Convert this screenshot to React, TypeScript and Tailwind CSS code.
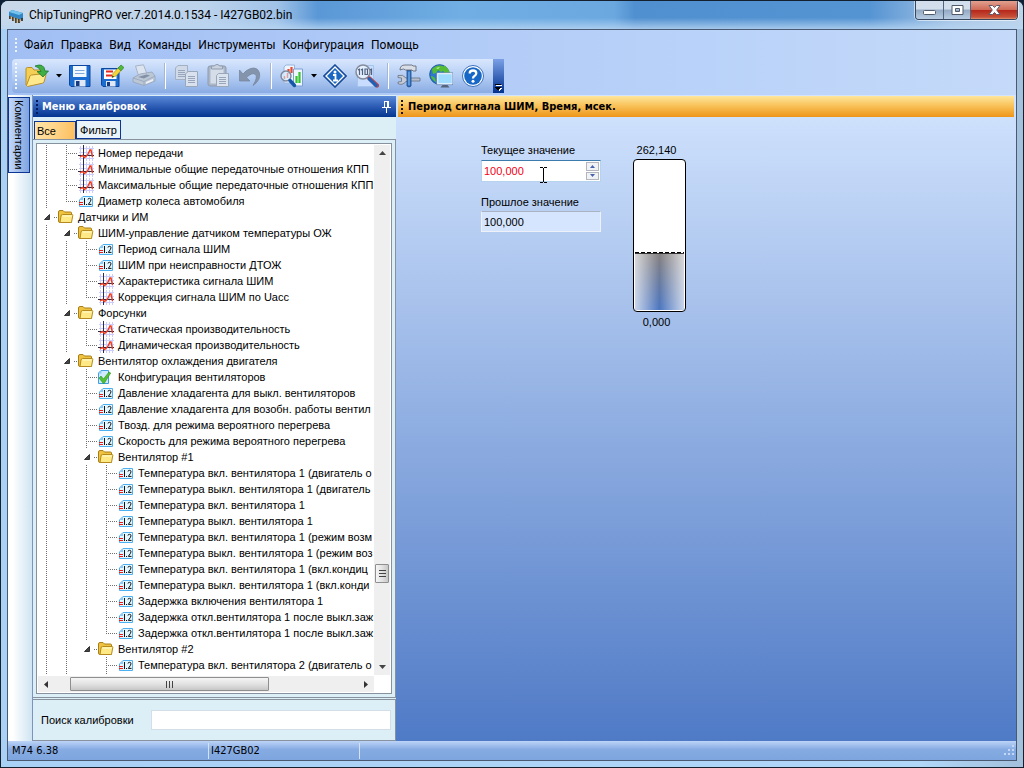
import React from "react";

type Kind = "folder" | "graph" | "value" | "check";
// Guide cells: "|" passing line, "+" branch, "L" last branch, "v" expander, " " empty
type Row = { cells: string; kind: Kind; text: string };

const rows: Row[] = [
  { cells: "|+", kind: "graph", text: "Номер передачи" },
  { cells: "|+", kind: "graph", text: "Минимальные общие передаточные отношения КПП" },
  { cells: "|+", kind: "graph", text: "Максимальные общие передаточные отношения КПП" },
  { cells: "|L", kind: "value", text: "Диаметр колеса автомобиля" },
  { cells: "v", kind: "folder", text: "Датчики и ИМ" },
  { cells: "|v", kind: "folder", text: "ШИМ-управление датчиком температуры ОЖ" },
  { cells: "||+", kind: "value", text: "Период сигнала ШИМ" },
  { cells: "||+", kind: "value", text: "ШИМ при неисправности ДТОЖ" },
  { cells: "||+", kind: "graph", text: "Характеристика сигнала ШИМ" },
  { cells: "||L", kind: "graph", text: "Коррекция сигнала ШИМ по Uacc" },
  { cells: "|v", kind: "folder", text: "Форсунки" },
  { cells: "||+", kind: "graph", text: "Статическая производительность" },
  { cells: "||L", kind: "graph", text: "Динамическая производительность" },
  { cells: "|v", kind: "folder", text: "Вентилятор охлаждения двигателя" },
  { cells: "||+", kind: "check", text: "Конфигурация вентиляторов" },
  { cells: "||+", kind: "value", text: "Давление хладагента для выкл. вентиляторов" },
  { cells: "||+", kind: "value", text: "Давление хладагента для возобн. работы вентил" },
  { cells: "||+", kind: "value", text: "Твозд. для режима вероятного перегрева" },
  { cells: "||+", kind: "value", text: "Скорость для режима вероятного перегрева" },
  { cells: "||v", kind: "folder", text: "Вентилятор #1" },
  { cells: "|||+", kind: "value", text: "Температура вкл. вентилятора 1 (двигатель о" },
  { cells: "|||+", kind: "value", text: "Температура выкл. вентилятора 1 (двигатель" },
  { cells: "|||+", kind: "value", text: "Температура вкл. вентилятора 1" },
  { cells: "|||+", kind: "value", text: "Температура выкл. вентилятора 1" },
  { cells: "|||+", kind: "value", text: "Температура вкл. вентилятора 1 (режим возм" },
  { cells: "|||+", kind: "value", text: "Температура выкл. вентилятора 1 (режим воз" },
  { cells: "|||+", kind: "value", text: "Температура вкл. вентилятора 1 (вкл.кондиц" },
  { cells: "|||+", kind: "value", text: "Температура выкл. вентилятора 1 (вкл.конди" },
  { cells: "|||+", kind: "value", text: "Задержка включения вентилятора 1" },
  { cells: "|||+", kind: "value", text: "Задержка откл.вентилятора 1 после выкл.заж" },
  { cells: "|||L", kind: "value", text: "Задержка откл.вентилятора 1 после выкл.заж" },
  { cells: "||v", kind: "folder", text: "Вентилятор #2" },
  { cells: "|| +", kind: "value", text: "Температура вкл. вентилятора 2 (двигатель о" },
];

function Guide({ c }: { c: string }) {
  return (
    <svg width="20" height="16" className="shrink-0" shapeRendering="crispEdges" fill="none" stroke="#6f6f6f">
      {(c === "|" || c === "+") && <path d="M8.500 0V16" strokeDasharray="1 1" />}
      {c === "L" && <path d="M8.500 0V9" strokeDasharray="1 1" />}
      {(c === "+" || c === "L") && <path d="M10 8.500H20" strokeDasharray="1 1" />}
      {c === "v" && (
        <>
          <path d="M16 8.500H20" strokeDasharray="1 1" />
          <path d="M6.500 10.500L11.500 5.500V10.500Z" fill="#444" stroke="#333" strokeWidth="1" shapeRendering="auto" />
        </>
      )}
    </svg>
  );
}

function NodeIcon({ kind }: { kind: Kind }) {
  if (kind === "folder")
    return (
      <svg width="20" height="16" className="shrink-0">
        <path d="M.5 3Q.5 1.500 2 1.500H5L6.500 3H12.500Q13.500 3 13.500 4V13.500H2Q.5 13.500 .5 12Z" fill="#efc33f" stroke="#a8801a" />
        <path d="M2 13.500L3 7Q3.200 5.500 4.500 5.500H14Q15 5.500 14.800 6.500L13.700 12.500Q13.500 13.500 12.500 13.500Z" fill="#ffe987" stroke="#b58a1c" />
        <path d="M4.500 7H13.500" stroke="#fffbd2" />
      </svg>
    );
  if (kind === "graph")
    return (
      <svg width="20" height="16" className="shrink-0" fill="none">
        <path d="M2.500 1V16M8.500 1V16M11.500 1V16M14.500 1V16M1 3.500H16M1 7.500H16M1 13.500H16" stroke="#cdcdfb" shapeRendering="crispEdges" />
        <path d="M5.500 0V16M0 10.500H16" stroke="#2b2b4a" shapeRendering="crispEdges" />
        <path d="M2 12L4.500 10.500L6.500 12.500L9.500 10L12 5L13 5L14.500 12" stroke="#f23a1d" strokeWidth="1.400" />
      </svg>
    );
  if (kind === "value")
    return (
      <svg width="20" height="16" className="shrink-0">
        <path d="M5 3.500H14.500V13.500H1.500V7Z" fill="#e2f7ff" stroke="#4fb0f0" />
        <path d="M1.500 7L5 3.500V7Z" fill="#8cc7f3" />
        <path d="M1 9.500H5M1 11.500H5" stroke="#f01818" shapeRendering="crispEdges" />
        <path d="M6.500 5V12M8 11.500H9" stroke="#111" shapeRendering="crispEdges" />
        <path d="M10 6.500Q10 5.300 11.500 5.300T13 6.800Q13 8 10.300 11.400H13.500" stroke="#111" fill="none" />
      </svg>
    );
  return (
    <svg width="20" height="16" className="shrink-0">
      <path d="M3 1.500H10.500V14.500H.5V4Z" fill="#cdeaff" stroke="#3d9fe5" />
      <path d="M.5 4.500H3.500V1.500Z" fill="#8cc7f3" />
      <path d="M1 9L3 7L5.500 10L11 3L12.700 4L5.800 15Z" fill="#52c234" stroke="#2d8f1e" strokeWidth=".6" />
    </svg>
  );
}

const Svg = ({ children }: { children: React.ReactNode }) => (
  <svg width="24" height="24" viewBox="0 0 24 24" fill="none">
    {children}
  </svg>
);

const OpenIcon = () => (
  <Svg>
    <path d="M1 21V5Q1 3.500 2.500 3.500H7L9 6H17V12L5 21.500Z" fill="#f5cf55" stroke="#b98f28" />
    <path d="M1.500 21.500L5 12Q5.300 11 6.500 11L20 9.500Q21.300 9.500 21 10.700L19 18Q18.500 19 17.500 19.200L2.500 22.500Z" fill="#ffe98d" stroke="#b98f28" />
    <path d="M10 2Q19 -1.500 20 7H23.500L18 13L12 7.500H16Q15 3.500 10 2Z" fill="#3fae43" stroke="#1b7a29" strokeWidth=".8" />
  </Svg>
);
const SaveIcon = () => (
  <Svg>
    <path d="M1.500 1.500H22V22.500H3L1.500 21Z" fill="#1b6dd0" stroke="#0c46a0" />
    <rect x="5" y="2" width="13.500" height="11" fill="#f2f8ff" />
    <path d="M7 6.500H16.500M7 9.500H16.500" stroke="#7fa8dc" />
    <rect x="6.500" y="16" width="11" height="6.500" fill="#dfe8f4" />
    <rect x="8" y="17" width="3.500" height="5" fill="#173a80" />
  </Svg>
);
const SaveEditIcon = () => (
  <Svg>
    <path d="M1.500 4.500H19V22.500H3L1.500 21Z" fill="#1b6dd0" stroke="#0c46a0" />
    <rect x="4" y="5.500" width="12.500" height="9.500" fill="#fff" />
    <path d="M6 7.500H13M6 11.500H12" stroke="#e32b20" strokeWidth="1.800" />
    <rect x="6" y="17" width="9.500" height="5.500" fill="#dfe8f4" />
    <rect x="7" y="18" width="3" height="4" fill="#173a80" />
    <path d="M12 13.500L13 9.500L19 3L22 5.500L16 12Z" fill="#f5d437" stroke="#8b8a20" strokeWidth=".6" />
    <path d="M18 4L21 1L24 3.500L21 6.800Z" fill="#4fb93b" stroke="#2b7b22" strokeWidth=".6" />
    <path d="M12 13.500L12.600 11.500L14 12.800Z" fill="#222" />
  </Svg>
);
const PrintIcon = () => (
  <Svg>
    <path d="M3.500 2L11.500 .8L15 10L7 13Z" fill="#dce4f0" stroke="#a7b3c6" />
    <path d="M1 14L8 10L20 8L23 12V17L12 21.500L1 18Z" fill="#bcc7d6" stroke="#96a3b8" strokeWidth=".8" />
    <path d="M1 14L12 17.500L23 12M12 17.500V21.500" stroke="#96a3b8" strokeWidth=".8" />
    <path d="M6 13L12 14.600L18 11.500L14.500 10.500Z" fill="#8291a8" />
    <path d="M14 18L21 15V17L14 20Z" fill="#edf1f7" />
  </Svg>
);
const CopyIcon = () => (
  <Svg>
    <path d="M4 1.500H13.500V15.500H1.500V4Z" fill="#d0d9e8" stroke="#a3afc2" />
    <path d="M4 6.500H11M4 8.500H11M4 10.500H11M4 12.500H11" stroke="#98a5bb" />
    <path d="M14 7.500H23.500V22.500H11.500V10Z" fill="#d9e1ee" stroke="#9aa7bb" />
    <path d="M14 12.500H21M14 14.500H21M14 16.500H21M14 18.500H21" stroke="#98a5bb" />
  </Svg>
);
const PasteIcon = () => (
  <Svg>
    <rect x="2" y="2" width="18" height="20" rx="2" fill="#aab6c7" stroke="#8e9bb0" />
    <rect x="4.500" y="4.500" width="13" height="15" fill="#d5dde9" />
    <path d="M5.500 5V2H8.500Q9 .5 11 .5T13.500 2H16.500V5Z" fill="#cbd3df" stroke="#8e9bb0" />
    <path d="M12.500 9.500H22.500V22.500H10.500V11.500Z" fill="#dae2ee" stroke="#9aa7bb" />
    <path d="M13 13.500H20M13 15.500H20M13 17.500H20M13 19.500H20" stroke="#98a5bb" />
  </Svg>
);
const UndoIcon = () => (
  <Svg>
    <path d="M1.500 6V17H12L8.500 13.500Q14 8 17.500 10.500Q20 13 15 21.500Q23 16 21.500 9Q19.500 2.500 12.500 4.500Q8 6 5 10Z" fill="#8494ab" stroke="#74849d" strokeWidth=".7" />
  </Svg>
);
const ChartIcon = () => (
  <Svg>
    <path d="M6 1H14.500V19H4V3Z" fill="#eef5ff" stroke="#98b6dd" />
    <path d="M8.500 5V10M11.500 3V9" stroke="#e8482c" strokeWidth="2.200" />
    <path d="M13.500 5H22.500V22H13.500Z" fill="#edf6ff" stroke="#7d9ed0" />
    <path d="M16.500 12V19M19.500 8V19" stroke="#37c32e" strokeWidth="2.200" />
    <circle cx="6" cy="12" r="5" fill="#d5ebff" fillOpacity=".85" stroke="#7d879c" strokeWidth="1.400" />
    <path d="M4.500 12V15M7.500 9V14" stroke="#e0a09e" strokeWidth="1.500" />
    <path d="M10 16.500L14.500 21.500" stroke="#1757a7" strokeWidth="3.500" strokeLinecap="round" />
  </Svg>
);
const InfoIcon = () => (
  <Svg>
    <path d="M12 1L23 12L12 23L1 12Z" fill="#fff" stroke="#174b9c" strokeWidth="1.600" />
    <path d="M12 4L20 12L12 20L4 12Z" fill="#1969c3" />
    <circle cx="12" cy="8" r="1.500" fill="#fff" />
    <path d="M10 11H12.500V16M10 16.500H15" stroke="#fff" strokeWidth="1.800" />
  </Svg>
);
const BinaryIcon = () => (
  <Svg>
    <path d="M4 1.500H18.500V22.500H2.500V4Z" fill="#c8ddfd" stroke="#a5c4ed" />
    <circle cx="8" cy="8" r="7" fill="#e4f0ff" stroke="#858b9b" strokeWidth="1.500" />
    <path d="M4.500 4.500V11M3 6L4.500 5M7.500 4.500V11M6 6L7.500 5M10 5H12.500V10.500H10ZM16.500 4.500V11M15 6L16.500 5" stroke="#51617e" strokeWidth="1.200" />
    <path d="M14.500 14.500L22 21.500" stroke="#b8484f" strokeWidth="4.400" strokeLinecap="round" />
    <path d="M14.200 14.800L21 21.500" stroke="#1d61b8" strokeWidth="3.200" strokeLinecap="round" />
  </Svg>
);
const ToolsIcon = () => (
  <Svg>
    <path d="M13 14H23V17H13Z" fill="#b5bfcf" stroke="#687182" strokeWidth=".8" />
    <path d="M1 11.500Q6 10 9 14H11V17.500H9Q5 22 1 19.500V18L4.500 17.500V14L1 13.500Z" fill="#c5cbd7" stroke="#687182" strokeWidth=".8" />
    <path d="M10 6H14V22Q12 24 10 22Z" fill="#3479ca" stroke="#1a4784" strokeWidth=".8" />
    <path d="M12 8V21" stroke="#83b9ee" />
    <path d="M3 6Q3 1 8 1H15L16 2H19V7H16L15 6H8.500Q7 4 3 6Z" fill="#d9dde5" stroke="#59606e" strokeWidth=".8" />
  </Svg>
);
const GlobeIcon = () => (
  <Svg>
    <circle cx="10.500" cy="10.500" r="9.800" fill="#2d78cd" stroke="#1a569b" />
    <path d="M3 5Q8 0 14 2L16 6L12 8L9 6L7 9L4 10ZM15 1.500Q20 4 20.500 9L15 9L14 5Z" fill="#55bd35" />
    <path d="M3 12L6 14L7 18Q3 16 2 12Z" fill="#55bd35" />
    <path d="M7 4L11 3L9 5Z" fill="#c9f3a4" />
    <rect x="8.500" y="9.500" width="15" height="10.500" fill="#9fdcff" stroke="#f2f7fc" strokeWidth="1.500" />
    <rect x="7.800" y="8.800" width="16" height="12" stroke="#5a7ba8" strokeWidth=".6" />
    <path d="M13.500 21H18.500L20.500 23.500H11.500Z" fill="#55657c" />
  </Svg>
);
const HelpIcon = () => (
  <Svg>
    <circle cx="12" cy="12" r="10.500" fill="#fff" stroke="#3970bd" />
    <circle cx="12" cy="12" r="8.800" fill="#1767c6" />
    <path d="M8.700 9.500Q8.700 6.500 12 6.500T15.300 9.300Q15.300 11 13.500 12Q12 12.800 12 14.500" stroke="#fff" strokeWidth="2.300" />
    <circle cx="12" cy="17.300" r="1.500" fill="#fff" />
  </Svg>
);

const Tool = ({ name, children }: { name: string; children: React.ReactNode }) => (
  <button type="button" aria-label={name} className="flex w-8 items-center justify-center">
    {children}
  </button>
);
const Drop = ({ name }: { name: string }) => (
  <button type="button" aria-label={name} className="flex w-[11px] items-center justify-center">
    <svg width="6" height="4">
      <path d="M0 0H6L3 3.500Z" fill="#000" />
    </svg>
  </button>
);
const Sep = () => (
  <div className="flex w-[10px] justify-center py-1">
    <div className="w-[2px] border-l border-[#a5b6d6] bg-white" />
  </div>
);
const Grip = ({ dots, color }: { dots: number; color: string }) => (
  <svg width="3" height={dots * 4} className="shrink-0">
    {Array.from({ length: dots }, (_, i) => (
      <rect key={i} x="0" y={i * 4 + 1} width="2" height="2" fill={color} />
    ))}
  </svg>
);

const menu = ["Файл", "Правка", "Вид", "Команды", "Инструменты", "Конфигурация", "Помощь"];

export default function App() {
  return (
    <div className="h-screen bg-[#0d2036] font-['Liberation_Sans',Arial,sans-serif] text-[11px] leading-4 text-black">
      <div className="flex h-full flex-col overflow-hidden rounded-t-lg border border-[#15202e] bg-[linear-gradient(90deg,#a9d0f5,#b0d6f8_90%,#a3c0dc)] px-[6px] pb-[6px]">
        <header className="-mx-[6px] flex h-7 shrink-0 items-start bg-[linear-gradient(180deg,transparent_60%,#b9d6f2cc),linear-gradient(90deg,#c9d9ea,#bcd3ec_20%,#a1c3e8_27%,#5a97d6_31%,#70aee4_45%,#6ba8e0_60%,#5190d0_62%,#5594d3_85%,#a6c4e5_93%,#bdd3e9)] pl-[7px] pr-[5px]">
          <svg width="16" height="16" className="mt-[7px] shrink-0">
            <path d="M1 4L4 2L15 5V11L11 12L1 8Z" fill="#3286c4" />
            <path d="M1 4L4 2L15 5L11 7Z" fill="#74c3ec" />
            <path d="M2 8V11M5 9V13M8 10V15M11 11V15M14 10V13" stroke="#38342c" strokeWidth="1.800" />
            <path d="M3 8V11M6 9V13M9 10V15M12 11V14" stroke="#cf9c46" strokeWidth=".8" />
          </svg>
          <h1 className="ml-[5px] mt-[6px] flex-1 font-['Roboto',sans-serif] text-xs leading-4">ChipTuningPRO ver.7.2014.0.1534 - I427GB02.bin</h1>
          <div className="flex h-[19px] overflow-hidden rounded-b border border-t-0 border-[#37475f] shadow-[0_0_0_1px_#ffffff90]">
            <button type="button" aria-label="Свернуть" className="flex w-7 items-center justify-center border-r border-[#52657f] bg-[linear-gradient(#d2deeb_45%,#93a9c4_50%,#b8cde2)]">
              <svg width="13" height="12">
                <rect x=".5" y="6.500" width="12" height="4" rx="1" fill="#fff" stroke="#505a6b" />
              </svg>
            </button>
            <button type="button" aria-label="Развернуть" className="flex w-[27px] items-center justify-center border-r border-[#52657f] bg-[linear-gradient(#d2deeb_45%,#93a9c4_50%,#b8cde2)]">
              <svg width="13" height="12">
                <path d="M1 1.500H12V10.500H1ZM4.500 4.500V7.500H8.500V4.500Z" fill="#fff" fillRule="evenodd" stroke="#505a6b" />
              </svg>
            </button>
            <button type="button" aria-label="Закрыть" className="flex w-[46px] items-center justify-center bg-[linear-gradient(#e2a08f,#cf6b57_48%,#b5281b_52%,#c8523a_90%,#de9473)]">
              <svg width="13" height="12">
                <path d="M1 1.500H4.500L6.500 3.500L8.500 1.500H12L8.700 6L12 10.500H8.500L6.500 8.500L4.500 10.500H1L4.300 6Z" fill="#fff" stroke="#5e5a68" />
              </svg>
            </button>
          </div>
        </header>

        <div className="flex min-h-0 flex-1 flex-col border border-[#4a5a72]">
          <div className="shrink-0 bg-[linear-gradient(90deg,#a2bff4,#b9d2f9_68%,#c5daf9)] pb-[2px]">
            <nav className="flex h-[29px] items-center pl-[7px]">
              <Grip dots={4} color="#eef4ff" />
              <ul className="ml-[6px] flex gap-[7px] font-['Roboto',sans-serif] text-xs leading-4">
                {menu.map((m) => (
                  <li key={m}>
                    <a href="#">{m}</a>
                  </li>
                ))}
              </ul>
            </nav>
            <div className="ml-1 flex h-[34px] w-fit overflow-hidden rounded-l bg-[linear-gradient(#d9e7fd,#b4cdf4_50%,#8aace3)]">
              <div className="flex w-[9px] items-center pl-[3px]">
                <Grip dots={7} color="#f5f8ff" />
              </div>
              <Tool name="Открыть"><OpenIcon /></Tool>
              <Drop name="Недавние файлы" />
              <Tool name="Сохранить"><SaveIcon /></Tool>
              <Tool name="Сохранить как"><SaveEditIcon /></Tool>
              <Tool name="Печать"><PrintIcon /></Tool>
              <Sep />
              <Tool name="Копировать"><CopyIcon /></Tool>
              <Tool name="Вставить"><PasteIcon /></Tool>
              <Tool name="Отменить"><UndoIcon /></Tool>
              <Sep />
              <Tool name="Анализ"><ChartIcon /></Tool>
              <Drop name="Виды анализа" />
              <Tool name="Сведения"><InfoIcon /></Tool>
              <Tool name="Двоичный просмотр"><BinaryIcon /></Tool>
              <Sep />
              <Tool name="Настройки"><ToolsIcon /></Tool>
              <Tool name="Обновление"><GlobeIcon /></Tool>
              <Tool name="Справка"><HelpIcon /></Tool>
              <button type="button" aria-label="Параметры панели" className="ml-1 flex w-[11px] items-end justify-center bg-[linear-gradient(#7ba0e6,#01318e)] pb-[2px]">
                <svg width="7" height="8" shapeRendering="crispEdges">
                  <path d="M1 2H7V3H1ZM2 5H7V6H6V7H5V8H4V7H3V6H2Z" fill="#fff" />
                  <path d="M0 1H6V2H0ZM0 4H6V5H5V6H4V7H2V6H1V5H0Z" fill="#000" />
                </svg>
              </button>
            </div>
          </div>

          <main className="flex min-h-0 flex-1 bg-[#dceef6]">
            <aside className="w-6 shrink-0 bg-[linear-gradient(90deg,#fff_20%,#cfe4f1)] pt-[2px]">
              <button type="button" className="flex h-[76px] w-[22px] items-center justify-center border border-[#0d3596] bg-[linear-gradient(90deg,#c3d8f8,#7fa4df)] [writing-mode:vertical-rl]">
                Комментарии
              </button>
            </aside>

            <section className="flex w-[364px] shrink-0 flex-col border-l border-[#7b94bd]">
              <div className="mt-px flex h-[21px] shrink-0 items-center bg-[linear-gradient(#5a89d8,#2c5cb4_50%,#03348f)] pl-[3px] pr-1 font-['DejaVu_Sans_Condensed','DejaVu_Sans',sans-serif] font-bold text-white">
                <Grip dots={4} color="#001b5e" />
                <h2 className="ml-[3px] flex-1">Меню калибровок</h2>
                <button type="button" aria-label="Закрепить">
                  <svg width="10" height="13" fill="none" stroke="#fff" shapeRendering="crispEdges">
                    <path d="M2.500 7V1.500H6.500V7M5.500 2V7M0 7.500H9M4.500 8V13" />
                  </svg>
                </button>
              </div>
              <div className="flex shrink-0 pl-px pt-[3px]">
                <button type="button" className="mt-px h-[18px] w-[42px] border border-b-0 border-[#0d3596] bg-[linear-gradient(100deg,#ffe5a8,#ffd489_50%,#fdbd5c)] pl-[2px] text-left">Все</button>
                <button type="button" className="h-[19px] w-[45px] border border-[#0d3596] bg-[#eaf3fa] text-center">Фильтр</button>
              </div>
              <div className="flex min-h-0 flex-1 flex-col border border-l-0 border-[#87929e] p-[3px]">
                <div className="flex min-h-0 flex-1 flex-col border border-[#87929e] bg-white p-px">
                  <div className="flex min-h-0 flex-1">
                    <ul className="min-w-0 flex-1 overflow-hidden">
                      {rows.map((r, i) => (
                        <li key={i} className="flex h-4 whitespace-nowrap">
                          {r.cells.split("").map((c, j) => (
                            <Guide key={j} c={c} />
                          ))}
                          <NodeIcon kind={r.kind} />
                          <span>{r.text}</span>
                        </li>
                      ))}
                      <li aria-hidden="true" className="flex h-4">
                        {"|| |".split("").map((c, j) => (
                          <Guide key={j} c={c} />
                        ))}
                      </li>
                    </ul>
                    <div className="flex w-4 shrink-0 flex-col items-center bg-[#efefef]">
                      <button type="button" aria-label="Вверх" className="flex h-4 w-4 items-center justify-center">
                        <svg width="7" height="4"><path d="M0 4L3.500 0L7 4Z" fill="#444" /></svg>
                      </button>
                      <div className="grow-[404]" />
                      <div className="flex h-[19px] w-[14px] flex-col items-center justify-center gap-[2px] rounded-[1px] border border-[#8f8f8f] bg-[linear-gradient(90deg,#f5f5f5,#e3e3e3_50%,#c7c7c7)]">
                        <i className="h-px w-[7px] bg-[#444]" />
                        <i className="h-px w-[7px] bg-[#444]" />
                        <i className="h-px w-[7px] bg-[#444]" />
                      </div>
                      <div className="grow-[76]" />
                      <button type="button" aria-label="Вниз" className="flex h-4 w-4 items-center justify-center">
                        <svg width="7" height="4"><path d="M0 0H7L3.500 4Z" fill="#444" /></svg>
                      </button>
                    </div>
                  </div>
                  <div className="mr-4 mt-px flex h-4 shrink-0 items-center bg-[#efefef]">
                    <button type="button" aria-label="Влево" className="flex w-4 items-center justify-center">
                      <svg width="4" height="7"><path d="M4 0V7L0 3.500Z" fill="#333" /></svg>
                    </button>
                    <div className="grow-[16]" />
                    <div className="flex h-[14px] w-[199px] items-center justify-center gap-[2px] rounded-[1px] border border-[#8f8f8f] bg-[linear-gradient(#f5f5f5,#e3e3e3_50%,#c7c7c7)]">
                      <i className="h-[7px] w-px bg-[#444]" />
                      <i className="h-[7px] w-px bg-[#444]" />
                      <i className="h-[7px] w-px bg-[#444]" />
                    </div>
                    <div className="grow-[89]" />
                    <button type="button" aria-label="Вправо" className="flex w-4 items-center justify-center">
                      <svg width="4" height="7"><path d="M0 0V7L4 3.500Z" fill="#333" /></svg>
                    </button>
                  </div>
                </div>
              </div>
              <div className="mt-px flex h-[42px] shrink-0 items-center border border-l-0 border-[#87929e] pl-2 pr-1">
                <label htmlFor="search" className="w-[110px]">Поиск калибровки</label>
                <input id="search" className="h-5 min-w-0 flex-1 border border-[#d3dfe8] bg-white px-1" />
              </div>
            </section>

            <section className="flex min-w-0 flex-1 flex-col bg-[linear-gradient(#d2e4fe,#4f7ac6)] pl-[2px] pt-px">
              <div className="mr-[2px] flex h-[21px] shrink-0 items-center bg-[linear-gradient(#ffe69c,#f8bf55_50%,#ee9519)] pl-[3px] font-['DejaVu_Sans_Condensed','DejaVu_Sans',sans-serif] font-bold">
                <Grip dots={4} color="#1b1405" />
                <h2 className="ml-1">Период сигнала ШИМ, Время, мсек.</h2>
              </div>
              <div className="flex gap-8 pl-[83px] pt-[25px]">
                <div className="w-[120px]">
                  <label htmlFor="current" className="block">Текущее значение</label>
                  <div className="relative mt-[2px] flex h-[22px] border border-[#b5d3ec] border-t-[#3d7bad] bg-white p-px">
                    <input id="current" defaultValue="100,000" className="min-w-0 flex-1 pl-px text-[#f20018] outline-none" />
                    <div className="flex w-[13px] flex-col gap-px">
                      <button type="button" aria-label="Увеличить" className="flex flex-1 items-center justify-center border border-[#b3b6bd] bg-[#f1f2f5]">
                        <svg width="5" height="3"><path d="M0 3L2.500 0L5 3Z" fill="#4763ad" /></svg>
                      </button>
                      <button type="button" aria-label="Уменьшить" className="flex flex-1 items-center justify-center border border-[#b3b6bd] bg-[#f1f2f5]">
                        <svg width="5" height="3"><path d="M0 0H5L2.500 3Z" fill="#4763ad" /></svg>
                      </button>
                    </div>
                    <svg width="7" height="16" className="absolute left-[58px] top-[6px]" stroke="#000" fill="none" shapeRendering="crispEdges">
                      <path d="M0 .5H3M4 .5H7M3.500 1V15M0 15.500H3M4 15.500H7" />
                    </svg>
                  </div>
                  <label htmlFor="previous" className="mt-3 block">Прошлое значение</label>
                  <input id="previous" readOnly defaultValue="100,000" className="mt-px h-[21px] w-full border border-[#eef2f8] border-t-[#a9b3c2] bg-[#d5e5fd] pl-[2px]" />
                </div>
                <div className="w-[53px] text-center">
                  <div className="pr-[6px]">262,140</div>
                  <div className="mt-px flex h-[153px] w-full flex-col rounded border border-black bg-white p-px">
                    <div className="flex-[93]" />
                    <div className="h-px bg-[repeating-linear-gradient(90deg,#000_0_4px,#fff_4px_6px)]" />
                    <div className="flex-[57] border-t border-[#333] bg-[linear-gradient(90deg,#ffffffb0,#ffffff00_50%,#ffffffb0),linear-gradient(#858080,#4b76c2)]" />
                  </div>
                  <div className="mt-[2px] pr-[6px]">0,000</div>
                </div>
              </div>
            </section>
          </main>

          <footer className="flex h-[19px] shrink-0 items-center bg-[linear-gradient(#bcd4f7,#86abe3_45%,#7ea5de)] font-['DejaVu_Sans_Condensed','DejaVu_Sans',sans-serif]">
            <span className="w-[201px] border-r border-[#d3e2f8] pl-1">M74 6.38</span>
            <span className="w-[151px] border-r border-[#d3e2f8] pl-[2px]">I427GB02</span>
            <span className="flex-1" />
            <svg width="12" height="12" fill="#c4d8f5">
              <path d="M8 0h2v2h-2zM4 4h2v2h-2zM8 4h2v2h-2zM0 8h2v2h-2zM4 8h2v2h-2zM8 8h2v2h-2z" />
            </svg>
          </footer>
        </div>
      </div>
    </div>
  );
}
